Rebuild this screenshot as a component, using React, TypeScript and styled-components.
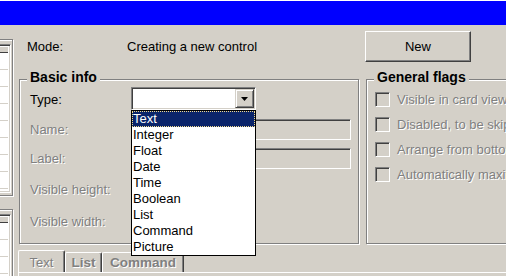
import React from "react";
import styled, { createGlobalStyle, css } from "styled-components";

const FACE = "#D4D0C8";
const SHADOW = "#808080";
const DARK = "#404040";
const LIGHT = "#FFFFFF";

const Global = createGlobalStyle`
  html, body { margin: 0; padding: 0; }
  body {
    background: ${FACE};
    font-family: "Liberation Sans", Arial, sans-serif;
    font-size: 13px;
    color: #000;
  }
`;

const sunken = css`
  box-sizing: border-box;
  border: 1px solid;
  border-color: ${SHADOW} ${LIGHT} ${LIGHT} ${SHADOW};
  box-shadow: inset 1px 1px 0 ${DARK}, inset -1px -1px 0 ${FACE};
`;

const raised = css`
  box-sizing: border-box;
  border: 1px solid;
  border-color: ${LIGHT} ${DARK} ${DARK} ${LIGHT};
  box-shadow: inset -1px -1px 0 ${SHADOW}, inset 1px 1px 0 ${FACE};
`;

const etched = css`
  box-sizing: border-box;
  border: 1px solid ${SHADOW};
  box-shadow: 1px 1px 0 ${LIGHT}, inset 1px 1px 0 ${LIGHT};
`;

const disabledText = css`
  color: ${SHADOW};
  text-shadow: 1px 1px 0 ${LIGHT};
`;

const Window = styled.div`
  width: 506px;
  height: 276px;
  overflow: hidden;
  background: ${FACE};
  border-top: 1px solid ${LIGHT};
  box-sizing: border-box;
  display: flex;
  flex-direction: column;
`;

const TitleBar = styled.div`
  flex: none;
  height: 24px;
  background: #0000ff;
`;

const Body = styled.div`
  flex: 1;
  min-height: 0;
  display: flex;
`;

const LeftStrip = styled.div`
  flex: none;
  width: 14px;
  padding-right: 1px;
  box-sizing: border-box;
  overflow: hidden;
  display: flex;
  flex-direction: column;
  align-items: flex-end;
`;

const SideFrame = styled.div<{ $h: number; $mt: number }>`
  ${etched};
  flex: none;
  width: 200px;
  height: ${(p) => p.$h}px;
  margin-top: ${(p) => p.$mt}px;
  padding: 4px 1px 2px 1px;
  display: flex;
  flex-direction: column;
`;

const ListView = styled.div`
  ${sunken};
  flex: 1;
  background: ${LIGHT};
  padding: 2px;
  overflow: hidden;
  display: flex;
  flex-direction: column;
`;

const ListHeader = styled.div`
  flex: none;
  height: 5px;
  background: ${FACE};
  border-bottom: 1px solid ${DARK};
`;

const ListRow = styled.div`
  flex: none;
  height: 16px;
  border-bottom: 1px solid ${FACE};
`;

const Main = styled.div`
  flex: 1;
  min-width: 0;
  display: flex;
  flex-direction: column;
`;

const TopRow = styled.div`
  display: grid;
  grid-template-columns: 100px 1fr 106px;
  align-items: center;
  height: 31px;
  padding: 6px 35px 0 13px;
`;

const Text = styled.span<{ $disabled?: boolean }>`
  white-space: nowrap;
  ${(p) => p.$disabled && disabledText};
`;

const Button = styled.button`
  ${raised};
  width: 106px;
  height: 31px;
  padding: 0;
  background: ${FACE};
  font: inherit;
  color: #000;
`;

const GroupsRow = styled.div`
  display: flex;
  gap: 7px;
  margin: 17px 0 0 5px;
`;

const Group = styled.div<{ $w: number }>`
  ${etched};
  position: relative;
  flex: none;
  width: ${(p) => p.$w}px;
  height: 165px;
`;

const Legend = styled.span`
  position: absolute;
  top: -11px;
  left: 7px;
  padding: 0 3px;
  background: ${FACE};
  font-weight: bold;
  font-size: 14px;
  line-height: 16px;
  white-space: nowrap;
`;

const FormGrid = styled.div`
  display: grid;
  grid-template-columns: 101px 1fr;
  grid-template-rows: 24px 21px 21px 24px 24px;
  row-gap: 8px;
  align-items: center;
  padding: 7px 0 0 10px;
`;

const Field = styled.div<{ $w: number; $h: number }>`
  ${sunken};
  width: ${(p) => p.$w}px;
  height: ${(p) => p.$h}px;
  background: ${FACE};
`;

const Combo = styled.div`
  ${sunken};
  position: relative;
  align-self: start;
  width: 125px;
  height: 23px;
  padding: 1px;
  background: ${LIGHT};
  display: flex;
  justify-content: flex-end;
`;

const DropButton = styled.div`
  box-sizing: border-box;
  border: 1px solid;
  border-color: ${FACE} ${DARK} ${DARK} ${FACE};
  box-shadow: inset 1px 1px 0 ${LIGHT}, inset -1px -1px 0 ${SHADOW};
  background: ${FACE};
  width: 19px;
  height: 19px;
  display: flex;
  align-items: center;
  justify-content: center;
`;

const DropList = styled.ul`
  position: absolute;
  top: 22px;
  left: -1px;
  z-index: 10;
  width: 125px;
  box-sizing: border-box;
  margin: 0;
  padding: 0;
  list-style: none;
  border: 1px solid #000;
  background: ${LIGHT};
`;

const Option = styled.li<{ $sel?: boolean }>`
  height: 16px;
  line-height: 16px;
  padding-left: 1px;
  white-space: nowrap;
  color: ${(p) => (p.$sel ? LIGHT : "#000")};
  background: ${(p) => (p.$sel ? "#0A246A" : "transparent")};
  outline: ${(p) => (p.$sel ? "1px dotted #F2DB8C" : "none")};
  outline-offset: -1px;
`;

const FlagList = styled.div`
  display: flex;
  flex-direction: column;
  gap: 10px;
  padding: 12px 0 0 8px;
`;

const FlagRow = styled.div`
  display: flex;
  align-items: center;
  gap: 7px;
  height: 15px;
`;

const CheckBox = styled.span`
  ${sunken};
  flex: none;
  width: 15px;
  height: 15px;
  background: ${FACE};
`;

const TabStrip = styled.div`
  display: flex;
  align-items: flex-end;
  height: 22px;
  margin: 6px 0 0 4px;
`;

const Tab = styled.div<{ $w: number; $active?: boolean; $bold?: boolean }>`
  box-sizing: border-box;
  width: ${(p) => p.$w}px;
  height: ${(p) => (p.$active ? 22 : 20)}px;
  padding-top: ${(p) => (p.$active ? 2 : 0)}px;
  border: 1px solid ${LIGHT};
  border-right-color: ${DARK};
  border-bottom: none;
  border-radius: 2px 2px 0 0;
  box-shadow: inset -1px 0 0 ${SHADOW};
  display: flex;
  align-items: center;
  justify-content: center;
  font-weight: ${(p) => (p.$bold ? "bold" : "normal")};
  font-size: ${(p) => (p.$bold ? "13.5px" : "13px")};
  ${disabledText};
  white-space: nowrap;
`;

const TabPanel = styled.div`
  flex: 1;
  margin-left: 4px;
  border-top: 1px solid ${LIGHT};
  border-left: 1px solid ${LIGHT};
`;

const types = ["Text", "Integer", "Float", "Date", "Time", "Boolean", "List", "Command", "Picture"];
const flags = ["Visible in card view", "Disabled, to be skipped", "Arrange from bottom", "Automatically maximize"];

function SideList({ rows }: { rows: number }) {
  return (
    <ListView>
      <ListHeader />
      {Array.from({ length: rows }).map((_, i) => (
        <ListRow key={i} />
      ))}
    </ListView>
  );
}

export default function App() {
  return (
    <>
      <Global />
      <Window>
        <TitleBar />
        <Body>
          <LeftStrip>
            <SideFrame $h={157} $mt={14}>
              <SideList rows={9} />
            </SideFrame>
            <SideFrame $h={120} $mt={13}>
              <SideList rows={6} />
            </SideFrame>
          </LeftStrip>
          <Main>
            <TopRow>
              <Text>Mode:</Text>
              <Text>Creating a new control</Text>
              <Button>New</Button>
            </TopRow>
            <GroupsRow>
              <Group $w={340}>
                <Legend>Basic info</Legend>
                <FormGrid>
                  <Text>Type:</Text>
                  <Combo>
                    <DropButton>
                      <svg width="7" height="4" viewBox="0 0 7 4">
                        <polygon points="0,0 7,0 3.5,4" fill="#000" />
                      </svg>
                    </DropButton>
                    <DropList>
                      {types.map((t, i) => (
                        <Option key={t} $sel={i === 0}>
                          {t}
                        </Option>
                      ))}
                    </DropList>
                  </Combo>
                  <Text $disabled>Name:</Text>
                  <Field $w={220} $h={21} />
                  <Text $disabled>Label:</Text>
                  <Field $w={220} $h={21} />
                  <Text $disabled>Visible height:</Text>
                  <Field $w={60} $h={22} />
                  <Text $disabled>Visible width:</Text>
                  <Field $w={60} $h={22} />
                </FormGrid>
              </Group>
              <Group $w={160}>
                <Legend>General flags</Legend>
                <FlagList>
                  {flags.map((f) => (
                    <FlagRow key={f}>
                      <CheckBox />
                      <Text $disabled>{f}</Text>
                    </FlagRow>
                  ))}
                </FlagList>
              </Group>
            </GroupsRow>
            <TabStrip>
              <Tab $w={47} $active>
                Text
              </Tab>
              <Tab $w={37} $bold>
                List
              </Tab>
              <Tab $w={82} $bold>
                Command
              </Tab>
            </TabStrip>
            <TabPanel />
          </Main>
        </Body>
      </Window>
    </>
  );
}
